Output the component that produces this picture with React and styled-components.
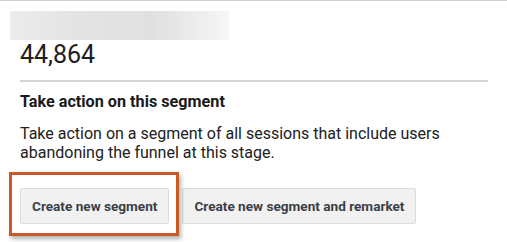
import React from "react";
import styled, { createGlobalStyle } from "styled-components";

const GlobalStyle = createGlobalStyle`
  body {
    margin: 0;
    background: #fff;
    font-family: Roboto, "Liberation Sans", sans-serif;
    color: #212121;
  }
`;

const Page = styled.div`
  border-top: 1px solid #d0d0d0;
  width: 507px;
  height: 241px;
  overflow: hidden;
`;

const Redacted = styled.div`
  margin: 10px 0 0 10px;
  width: 219px;
  height: 29px;
  background: linear-gradient(
    to right,
    #ececec 0%,
    #e4e4e4 30%,
    #e0e0e0 65%,
    #f6f6f6 100%
  );
  filter: blur(0.6px);
`;

const Content = styled.div`
  padding: 0 19px 0 20px;
`;

const Metric = styled.div`
  font-size: 25px;
  line-height: 30px;
  color: #202020;
`;

const Rule = styled.hr`
  border: none;
  border-top: 2px solid #d4d4d4;
  margin: 10px 0 0;
`;

const Heading = styled.h3`
  margin: 10px 0 0;
  font-size: 16.2px;
  font-weight: 700;
  line-height: 20px;
  color: #1a1a1a;
`;

const Text = styled.p`
  margin: 12px 0 0;
  font-size: 16px;
  line-height: 19px;
  color: #212121;
`;

const Actions = styled.div`
  display: flex;
  gap: 13px;
  margin-top: 26px;
`;

const Highlight = styled.div`
  position: relative;

  &::after {
    content: "";
    position: absolute;
    left: -11px;
    right: -10px;
    top: -16px;
    bottom: -12px;
    border: 3px solid #c85a28;
    box-shadow: 2px 3px 4px rgba(0, 0, 0, 0.3);
    pointer-events: none;
  }
`;

const Button = styled.button`
  height: 36px;
  padding: 0 11px;
  background: #f1f1f1;
  border: 1px solid #dcdcdc;
  border-radius: 2px;
  font-family: Roboto, "Liberation Sans", sans-serif;
  font-size: 13.6px;
  font-weight: 700;
  color: #3a3f47;
  cursor: pointer;
`;

export default function App() {
  return (
    <>
      <GlobalStyle />
      <Page>
        <Redacted />
        <Content>
          <Metric>44,864</Metric>
          <Rule />
          <Heading>Take action on this segment</Heading>
          <Text>
            Take action on a segment of all sessions that include users
            abandoning the funnel at this stage.
          </Text>
          <Actions>
            <Highlight>
              <Button>Create new segment</Button>
            </Highlight>
            <Button>Create new segment and remarket</Button>
          </Actions>
        </Content>
      </Page>
    </>
  );
}
